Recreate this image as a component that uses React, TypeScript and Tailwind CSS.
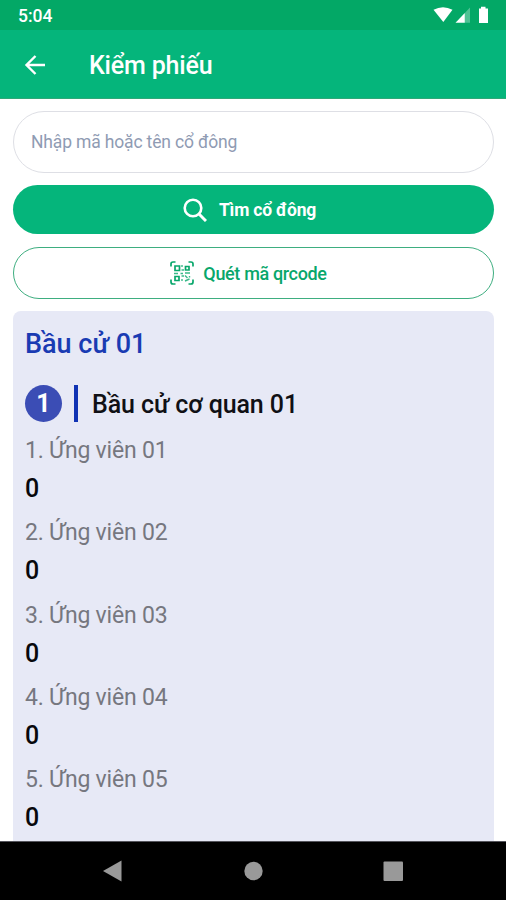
import React from "react";

const candidates = ["01", "02", "03", "04", "05"];

function StatusIcons() {
  return (
    <svg className="h-[30px] w-[60px]" viewBox="0 0 60 30" fill="#fff">
      <path d="M0.500 9.800Q10 4.500 19.500 9.800L10.300 22Z" />
      <path d="M22.500 22.800L31.800 13V22.800Z" />
      <path d="M31.800 13L37 7.600V22.800H31.800Z" opacity="0.3" />
      <path d="M46 8.400H48V6.800H52.500V8.400H55V23H46Z" />
    </svg>
  );
}

function QrIcon() {
  return (
    <svg className="h-6 w-6" viewBox="0 0 24 24" fill="none" stroke="#08a76b" strokeWidth="1.700">
      <path d="M1 5.500V3Q1 1 3 1H5.500M18.500 1H21Q23 1 23 3V5.500M23 18.500V21Q23 23 21 23H18.500M5.500 23H3Q1 23 1 21V18.500" />
      <path d="M5 5H9.500V9.500H5ZM15.500 5.500H19V9H15.500ZM5 15.500H9V19.500H5Z" />
      <path d="M12 4V6M11.500 9H14M4 12.500H8M10.500 12.500H13M15 12H20M11.500 15H14M12 18V20M15 14.500L17.500 17M19.500 15V16.500M15 20L19.500 18" strokeWidth="1.400" opacity="0.8" />
    </svg>
  );
}

export default function App() {
  return (
    <div className="flex h-[900px] w-[506px] flex-col overflow-hidden bg-white font-['Roboto',sans-serif]">
      <div className="flex h-[30px] shrink-0 items-center justify-between bg-[#03a866] pl-[18px] pr-[13px] text-white">
        <span className="pt-[2px] text-[17.500px] font-medium leading-5">5:04</span>
        <StatusIcons />
      </div>
      <header className="flex h-[69px] shrink-0 items-center border-b border-[#2fa878] bg-[#05b57b] pl-[24px] text-white">
        <svg className="mt-[2px] h-[22px] w-[22px]" viewBox="0 0 22 22" fill="none" stroke="#fff" strokeWidth="2.400">
          <path d="M21 11H3M11.500 2L2.500 11L11.500 20" />
        </svg>
        <h1 className="ml-[43px] pt-[4px] text-[25px] font-medium leading-8 tracking-[-0.180px]">Kiểm phiếu</h1>
      </header>
      <main className="flex min-h-0 flex-1 flex-col overflow-hidden pl-[13px] pr-[12px] pt-[12px]">
        <div className="flex h-[62px] shrink-0 items-center rounded-full border border-[#dedfe5] pl-[17px] text-[17.500px] tracking-[-0.160px] text-[#8f9bb3]">
          Nhập mã hoặc tên cổ đông
        </div>
        <button className="mt-[12px] flex h-[49px] shrink-0 items-center justify-center gap-[12px] rounded-full bg-[#05b57b] pr-[8px] text-[17.500px] font-bold tracking-[-0.180px] text-white">
          <svg className="h-6 w-6" viewBox="0 0 24 24" fill="none" stroke="#fff" strokeWidth="2.600">
            <circle cx="10" cy="10" r="8.300" />
            <path d="M16 16L23 23" strokeWidth="3" />
          </svg>
          <span className="pt-[2px]">Tìm cổ đông</span>
        </button>
        <button className="mt-[13px] flex h-[52px] shrink-0 items-center justify-center gap-[9px] rounded-full border border-[#3eae80] pr-[10px] text-[18px] font-medium tracking-[-0.350px] text-[#08a76b]">
          <QrIcon />
          <span className="pt-[1px]">Quét mã qrcode</span>
        </button>
        <section className="mt-[12px] flex shrink-0 flex-col rounded-t-lg bg-[#e7e9f6] px-[12px] pb-4 pt-[13px]">
          <h2 className="h-[61px] text-[27px] font-medium leading-10 text-[#1a3bb3]">Bầu cử 01</h2>
          <div className="flex h-[37px] items-center">
            <span className="flex size-[37px] items-center justify-center rounded-full bg-[#3b4db5] text-[25px] font-bold text-white">1</span>
            <span className="ml-[12px] h-[37px] w-[4px] bg-[#1033b4]" />
            <h3 className="ml-[14px] pt-[2px] text-[25px] font-medium tracking-[-0.100px] text-[#101015]">Bầu cử cơ quan 01</h3>
          </div>
          <ul className="pt-[8px]">
            {candidates.map((number, index) => (
              <li key={number} className="h-[82.250px]">
                <div className="h-[41px] text-[23px] leading-[41px] tracking-[-0.200px] text-[#76777f]">{index + 1}. Ứng viên {number}</div>
                <div className="h-[36px] text-[25px] font-medium leading-[35px] text-[#08080c]">0</div>
              </li>
            ))}
          </ul>
        </section>
      </main>
      <nav className="h-[59px] shrink-0 border-t border-[#55555c] bg-black">
        <svg className="h-[58px] w-full" viewBox="0 0 506 58" fill="#999">
          <path d="M103 29L121.500 18.500V39.500Z" />
          <circle cx="253.500" cy="29" r="9.200" />
          <rect x="383.500" y="19.500" width="19.500" height="19.500" rx="1" />
        </svg>
      </nav>
    </div>
  );
}
